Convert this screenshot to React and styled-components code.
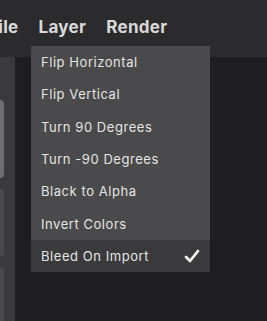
import styled, { createGlobalStyle } from 'styled-components';

const GlobalStyle = createGlobalStyle`
  html, body {
    margin: 0;
    padding: 0;
    background-color: #1e1e20;
    overflow: hidden;
  }
`;

const Page = styled.div`
  width: 267px;
  height: 321px;
  display: flex;
  flex-direction: column;
  font-family: 'Inter', 'Open Sans', sans-serif;
  background-color: #1e1e20;
  position: relative;
  overflow: hidden;
`;

const MenuBar = styled.div`
  height: 57px;
  flex-shrink: 0;
  display: flex;
  align-items: flex-start;
  gap: 20px;
  padding-top: 16px;
  box-sizing: border-box;
  margin-left: -12px;
  background-color: #2b2b2d;
`;

const MenuTitle = styled.div`
  color: #d9d9d9;
  font-size: 17px;
  font-weight: 700;
  line-height: 22px;
  letter-spacing: 0.3px;
`;

const Body = styled.div`
  flex-grow: 1;
  display: flex;
  min-height: 0;
`;

const SidePanel = styled.div`
  width: 15px;
  background-color: #3a3a3c;
  display: flex;
  flex-direction: column;
  gap: 11px;
  padding-top: 43px;
  box-sizing: border-box;
  overflow: hidden;
`;

const Card = styled.div`
  width: 4px;
  height: ${(props) => props.h}px;
  border-radius: 0 4px 4px 0;
  background-color: ${(props) => props.color};
  flex-shrink: 0;
`;

const Workspace = styled.div`
  flex-grow: 1;
  background-color: #1e1e20;
`;

const Dropdown = styled.div`
  position: absolute;
  top: 46px;
  left: 31px;
  width: 179px;
  background-color: #4a4a4c;
  display: flex;
  flex-direction: column;
`;

const Item = styled.div`
  height: 32.3px;
  display: flex;
  align-items: center;
  justify-content: space-between;
  padding: 0 10px;
  color: #e4e4e4;
  font-size: 13px;
  letter-spacing: 0.55px;
  background-color: ${(props) => (props.active ? '#3a3a3c' : 'transparent')};
`;

const Check = styled.svg`
  width: 16px;
  height: 14px;
`;

const items = [
  'Flip Horizontal',
  'Flip Vertical',
  'Turn 90 Degrees',
  'Turn -90 Degrees',
  'Black to Alpha',
  'Invert Colors',
];

function App() {
  return (
    <Page>
      <GlobalStyle />
      <MenuBar>
        <MenuTitle>File</MenuTitle>
        <MenuTitle>Layer</MenuTitle>
        <MenuTitle>Render</MenuTitle>
      </MenuBar>
      <Body>
        <SidePanel>
          <Card h={78} color="#6e6e70" />
          <Card h={68} color="#4a4a4c" />
          <Card h={80} color="#4a4a4c" />
        </SidePanel>
        <Workspace />
      </Body>
      <Dropdown>
        {items.map((label) => (
          <Item key={label}>{label}</Item>
        ))}
        <Item active>
          Bleed On Import
          <Check viewBox="0 0 16 14">
            <path d="M2 8 L6 12 L14 2" fill="none" stroke="#f2f2f2" strokeWidth="2.8" strokeLinecap="round" strokeLinejoin="round" />
          </Check>
        </Item>
      </Dropdown>
    </Page>
  );
}

export default App;
